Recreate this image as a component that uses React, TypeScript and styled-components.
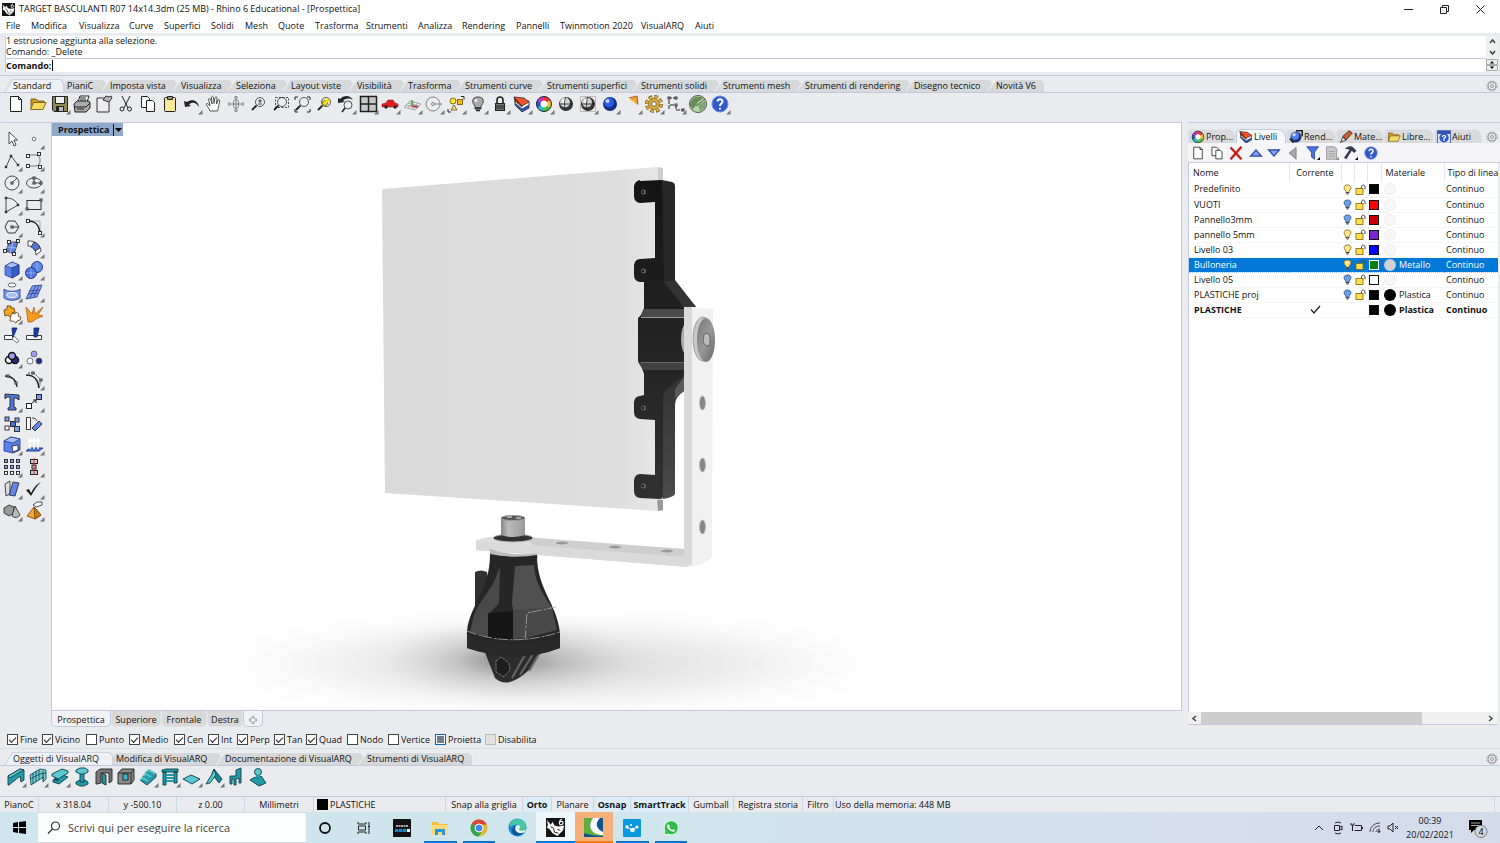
import React from "react";
import styled, { createGlobalStyle, css } from "styled-components";

const line = "#c3cadd";
const chrome = "#eaebef";
const ui = '"Open Sans", "Noto Sans", sans-serif';

const GlobalStyle = createGlobalStyle`
  *, *::before, *::after { box-sizing: border-box; }
  body { margin: 0; background: ${chrome}; font-family: ${ui}; font-size: 9px; line-height: 12px; color: #111; }
  button, input { font: inherit; color: inherit; margin: 0; }
  button { border: 0; background: none; padding: 0; white-space: nowrap; }
  h1, p { margin: 0; font-size: inherit; font-weight: inherit; }
  svg { display: block; }
`;

const Window = styled.div`
  min-height: 100vh;
  display: flex;
  flex-direction: column;
  overflow: hidden;
`;

const TitleBar = styled.header`
  display: flex;
  align-items: center;
  height: 18px;
  padding: 0 4px 0 2px;
  gap: 4px;
  background: #fff;
`;
const Title = styled.h1`
  flex: 1;
  white-space: nowrap;
`;
const WindowButton = styled.button`
  width: 32px;
  height: 16px;
  display: grid;
  place-items: center;
`;
const MenuBar = styled.nav`
  display: flex;
  height: 15px;
  padding-left: 6px;
  background: #fff;
`;
const MenuItem = styled.button<{ $w: number }>`
  flex: 0 0 ${(p) => p.$w}px;
  text-align: left;
`;

const CommandArea = styled.section`
  display: flex;
  height: 43px;
  padding: 3px 2px 3px 5px;
  border-bottom: 1px solid ${line};
`;
const CommandBox = styled.div`
  flex: 1;
  background: #fff;
  border-left: 1px solid ${line};
`;
const History = styled.div`
  height: 23px;
  border-bottom: 1px solid ${line};
  line-height: 10px;
  p { height: 11px; }
`;
const Prompt = styled.label`
  display: flex;
  align-items: center;
  height: 13px;
  font-weight: 700;
`;
const Caret = styled.span`
  width: 1px;
  height: 11px;
  margin-left: 1px;
  background: #000;
`;
const PromptInput = styled.input`
  flex: 1;
  height: 12px;
  border: 0;
  outline: 0;
  background: none;
`;
const Spinner = styled.div`
  width: 12px;
  background: #f0f0f0;
`;

const TabStrip = styled.div`
  display: flex;
  align-items: flex-end;
  height: 17px;
  padding-left: 4px;
  border-bottom: 1px solid ${line};
  position: relative;
`;
const Tab = styled.button<{ $w: number; $active?: boolean }>`
  position: relative;
  flex: 0 0 ${(p) => p.$w + 6}px;
  height: 13px;
  margin-right: -6px;
  padding-left: 9px;
  text-align: left;
  line-height: 13px;
  isolation: isolate;
  background: ${(p) => (p.$active ? "#ccd3e4" : "#eceef6")};
  clip-path: polygon(8px 0, calc(100% - 3px) 0, 100% 3px, 100% 100%, 0 100%);
  z-index: ${(p) => (p.$active ? 1 : 0)};
  &::before {
    content: "";
    position: absolute;
    z-index: -1;
    inset: 1px 1px 0 1px;
    background: ${(p) => (p.$active ? "#eff0f5" : "#d7d8d9")};
    clip-path: polygon(8px 0, calc(100% - 3px) 0, 100% 3px, 100% 100%, 0 100%);
  }
`;
const Gear = styled.button`
  margin-left: auto;
  width: 14px;
  height: 13px;
`;
const ToolGrid = styled.div<{ $cols: number; $width: number }>`
  display: grid;
  grid-template-columns: repeat(${(p) => p.$cols}, 1fr);
  width: ${(p) => p.$width}px;
  margin-left: 5px;
`;
const ToolButton = styled.button`
  height: 22px;
  min-height: 0;
  display: grid;
  place-items: center;
`;
const TopTools = styled.section`
  height: 43px;
`;

const Workspace = styled.main`
  flex: 1;
  display: grid;
  grid-template-columns: 51px minmax(0, 1fr) 312px;
  padding-top: 3px;
`;
const SideTools = styled.aside`
  display: grid;
  grid-template-columns: 22px 22px;
  grid-template-rows: repeat(18, minmax(0, 1fr));
  align-self: start;
  height: 400px;
  padding-top: 5px;
  margin-left: 1px;
  border-top: 1px solid ${line};
`;
const ViewColumn = styled.section`
  display: flex;
  flex-direction: column;
  margin-right: 6px;
`;
const Viewport = styled.div`
  position: relative;
  flex: 1;
  min-height: 0;
  background: #fff;
  border: 1px solid ${line};
  overflow: hidden;
`;
const ViewLabel = styled.button`
  position: absolute;
  left: 0;
  top: 0;
  display: flex;
  align-items: center;
  width: 71px;
  height: 13px;
  padding-left: 6px;
  background: #8fa9c8;
  font-weight: 700;
`;
const ViewArrow = styled.span`
  margin-left: auto;
  padding: 3px 1px;
  border-left: 1px solid #111;
`;
const ViewTabs = styled.div`
  display: flex;
  height: 16px;
`;
const ViewTab = styled.button<{ $w: number; $active?: boolean }>`
  width: ${(p) => p.$w}px;
  height: 16px;
  padding-top: 2px;
  border: 1px solid ${(p) => (p.$active ? line : "#e0e2e8")};
  border-top: 0;
  border-radius: 0 0 5px 5px;
  background: ${(p) => (p.$active ? "#f1f2f6" : "#d9d9d9")};
  display: grid;
  place-items: center;
`;

const LayerPanel = styled.aside`
  display: flex;
  flex-direction: column;
  border-top: 1px solid ${line};
  padding-top: 5px;
`;
const PanelTabs = styled.div`
  display: flex;
  align-items: flex-end;
  height: 15px;
`;
const PanelTab = styled.button<{ $w: number; $active?: boolean }>`
  flex: 0 0 ${(p) => p.$w}px;
  height: 14px;
  display: flex;
  align-items: center;
  gap: 1px;
  padding-left: 2px;
  border-radius: 4px 8px 0 0;
  background: ${(p) => (p.$active ? "#f6f7fa" : "#d9dadc")};
  border: 1px solid ${(p) => (p.$active ? line : "#dfe3ee")};
  border-bottom: 0;
`;
const PanelTools = styled.div`
  display: flex;
  align-items: center;
  height: 20px;
  background: #f5f5f7;
  border-bottom: 1px solid ${line};
`;
const PanelTool = styled.button<{ $w: number }>`
  width: ${(p) => p.$w}px;
  display: grid;
  place-items: center;
`;
const LayerList = styled.div`
  flex: 1;
  background: #fff;
  border-left: 1px solid ${line};
  margin-right: 2px;
`;
const LayerTable = styled.table`
  width: 100%;
  table-layout: fixed;
  border-collapse: collapse;
  th { height: 19px; font-weight: 400; text-align: left; padding: 0 0 0 4px; border-right: 1px solid #e5e7ee; white-space: nowrap; }
  th:nth-child(2) { text-align: center; padding: 0; }
  th:last-child { padding-left: 3px; border-right: 0; }
  td { height: 15px; padding: 0; white-space: nowrap; }
  td:first-child { padding-left: 5px; }
  td:last-child { padding-left: 2px; }
  td svg { margin: 0 auto; }
`;
const LayerRow = styled.tr<{ $selected?: boolean; $current?: boolean }>`
  border-bottom: 1px solid #f5f5f5;
  ${(p) => p.$selected && css`background: #0078d7; color: #fff; border-bottom: 1px dotted #9fd0ff;`}
  ${(p) => p.$current && css`font-weight: 700;`}
`;
const Swatch = styled.span<{ $color: string; $selected?: boolean }>`
  display: block;
  width: 10px;
  height: 10px;
  margin: 0 auto;
  background: ${(p) => p.$color};
  border: 1px solid ${(p) => (p.$selected ? "#fff" : "#111")};
`;
const Material = styled.span`
  display: flex;
  align-items: center;
  gap: 3px;
  padding-left: 3px;
`;
const MaterialBall = styled.span<{ $color: string }>`
  width: 12px;
  height: 12px;
  border-radius: 50%;
  background: ${(p) => p.$color};
  border: 1px solid rgba(0, 0, 0, 0.04);
`;
const ScrollRow = styled.div`
  display: flex;
  align-items: center;
  height: 13px;
  margin-right: 3px;
  background: #f0f0f0;
  border-bottom: 1px solid ${line};
`;
const ScrollButton = styled.button`
  width: 13px;
  height: 11px;
  display: grid;
  place-items: center;
`;
const ScrollTrack = styled.div`
  flex: 1;
`;
const ScrollThumb = styled.div`
  width: 78%;
  height: 12px;
  background: #cdcdcd;
`;
const PanelFoot = styled.div`
  height: 2px;
`;

const OsnapBar = styled.section`
  display: flex;
  align-items: center;
  height: 18px;
  margin-top: 4px;
  padding-left: 7px;
  border-bottom: 1px solid #dadde6;
`;
const OsnapItem = styled.label<{ $w: number }>`
  display: flex;
  align-items: center;
  gap: 2px;
  flex: 0 0 ${(p) => p.$w}px;
  white-space: nowrap;
`;
const Box = styled.input<{ $partial?: boolean }>`
  appearance: none;
  flex: 0 0 11px;
  height: 11px;
  background: #fff;
  border: 1px solid #444;
  display: grid;
  place-items: center;
  &:checked::after {
    content: "";
    width: 7px;
    height: 4px;
    border-left: 1px solid #222;
    border-bottom: 1px solid #222;
    transform: translateY(-1px) rotate(-45deg);
  }
  &:disabled { background: #e2e2e0; border-color: #bbb; }
  ${(p) => p.$partial && css`
    border-color: #0a64ad;
    &::after { content: ""; width: 7px; height: 7px; background: #6c7f90; }
  `}
`;
const ArqTools = styled.section`
  height: 47px;
`;

const StatusBar = styled.footer`
  display: flex;
  height: 16px;
  border-top: 1px solid ${line};
`;
const StatusCell = styled.button<{ $w: number; $on?: boolean; $left?: boolean }>`
  flex: 0 0 ${(p) => p.$w}px;
  display: flex;
  align-items: center;
  justify-content: ${(p) => (p.$left ? "flex-start" : "center")};
  gap: 2px;
  padding-left: ${(p) => (p.$left ? 1 : 0)}px;
  border-right: 1px solid #cfd5e4;
  background: ${(p) => (p.$on ? "#dcedf9" : "transparent")};
  font-weight: ${(p) => (p.$on ? 700 : 400)};
`;
const LayerChip = styled.span`
  width: 11px;
  height: 11px;
  margin-left: 2px;
  background: #000;
`;
const Taskbar = styled.nav`
  display: flex;
  height: 31px;
  background: linear-gradient(90deg, #cfe6ef 0%, #d0e5ec 50%, #d5dfee 78%, #d4dcec 100%);
`;
const StartButton = styled.button`
  width: 38px;
  display: grid;
  place-items: center;
`;
const SearchBox = styled.label`
  display: flex;
  align-items: center;
  gap: 6px;
  width: 268px;
  padding-left: 9px;
  background: #fbfdfe;
  border: 1px solid #cfd9de;
  border-width: 1px 0;
`;
const SearchInput = styled.input`
  flex: 1;
  min-width: 0;
  padding: 0 1px;
  border: 0;
  outline: 0;
  background: none;
  font-size: 11px;
  &::placeholder { color: #444; opacity: 1; }
`;
const TaskIcons = styled.div`
  display: grid;
  grid-template-columns: repeat(10, 1fr);
  width: 384px;
`;
const TaskButton = styled.button<{ $open?: boolean; $tint?: string }>`
  display: grid;
  place-items: center;
  background: ${(p) => p.$tint || "transparent"};
  border-bottom: 2px solid ${(p) => (p.$tint === "#f5b07a" ? "#f57c12" : p.$open ? "#0a78d0" : "transparent")};
  margin: 0 ${(p) => (p.$tint ? 0 : 3)}px;
  padding-top: 2px;
`;
const Tray = styled.div`
  display: flex;
  align-items: center;
  margin-left: auto;
  padding-right: 4px;
`;
const TrayButton = styled.button<{ $w: number }>`
  width: ${(p) => p.$w}px;
  display: grid;
  place-items: center;
`;
const Clock = styled.time`
  width: 58px;
  text-align: center;
  line-height: 14px;
`;

/* Glyphs are drawn on a 22 x 22 grid. */
const K = "#222";
const L = "#a9bdf5";
const S = { fill: "none", stroke: K, strokeWidth: 1 };
const Sq = ({ x, y, f = "#fff", s = 3 }: { x: number; y: number; f?: string; s?: number }) => (
  <rect x={x - s / 2} y={y - s / 2} width={s} height={s} fill={f} stroke={K} strokeWidth=".9" />
);
const lens = (
  <g>
    <circle cx="13" cy="9" r="4.500" fill="#e9eef0" stroke="#555" />
    <path d="M9.500 12.500L5 17" stroke={K} strokeWidth="1.800" />
  </g>
);
const ball = (c1: string, c2: string) => (
  <g>
    <circle cx="11" cy="11" r="7" fill={c2} />
    <circle cx="10" cy="9.500" r="5" fill={c1} />
    <circle cx="8.500" cy="8" r="2" fill="#fff" opacity=".75" />
  </g>
);
const wheel = (
  <g fill="none" strokeWidth="4">
    <circle cx="11" cy="11" r="4" fill="#fff" />
    {["#e33", "#f4c020", "#52c234", "#25bfc5", "#2c55dc", "#c335c8"].map((c, i) => (
      <path key={c} d="M11 5.500a5.500 5.500 0 0 1 4.760 2.750" stroke={c} transform={`rotate(${i * 60} 11 11)`} />
    ))}
    <circle cx="11" cy="11" r="7.500" stroke={K} strokeWidth="1" />
  </g>
);
const layers = (
  <g stroke={K} strokeWidth=".7">
    <path d="M4 8v4l7 7 7-4v-5z" fill="#2954bf" />
    <path d="M4 7v3l7 6 7-4V8z" fill="#fff" />
    <path d="M3 4l8 6v4L4 8z" fill="#a82b16" />
    <path d="M3 4l10 1 5 4-7 4z" fill="#ef5427" />
  </g>
);
const help = (
  <g>
    <circle cx="11" cy="11" r="8" fill="#3158c9" stroke="#6e8de0" />
    <path d="M8.500 8.500c.3-3.300 5.300-3 5 .2-.2 1.700-2.500 2-2.500 4.300M11 14.800v1.800" fill="none" stroke="#fff" strokeWidth="2" />
  </g>
);
const box = <g stroke="#243a86" strokeWidth=".7"><path d="M4 7l7-4 7 3v9l-7 4-7-3z" fill="#5a80e8" /><path d="M4 7l7-4 7 3-7 3z" fill={L} /><path d="M11 9v10l7-4V6z" fill="#375cc4" /></g>;
const cog = (
  <g>
    <circle cx="11" cy="11" r="7" fill="none" stroke="#5c4a16" strokeWidth="4" strokeDasharray="3.500 2" />
    <circle cx="11" cy="11" r="7" fill="none" stroke="#d8ab3a" strokeWidth="3" strokeDasharray="2.800 2.700" strokeDashoffset="-.3" />
    <circle cx="11" cy="11" r="5.500" fill="#d8ab3a" stroke="#8a6718" strokeWidth=".6" />
    <circle cx="11" cy="11" r="2.300" fill="#fff" stroke="#555" strokeWidth=".8" />
  </g>
);

const teal = "#249aa8";
const tealLight = "#5cc6d1";
const glyphs: Record<string, React.ReactNode> = {
  file: <path d="M5.500 3.500h8l3 3v12h-11zM13.500 3.500v3h3" fill="#fff" stroke={K} />,
  open: <g stroke="#6b4c0c" strokeWidth=".8"><path d="M4 16V6h5l2 2h6v3" fill="#d49d1f" /><path d="M3.500 16.500l3-7H19l-3 7z" fill="#fadb62" /></g>,
  save: <g stroke={K}><path d="M3.500 3.500h15v15H5l-1.500-1.500z" fill="#8e8b55" /><path d="M6.500 3.500h9v7h-9z" fill="#eee" /><path d="M7.500 13.500h7v5h-7z" fill="#bbb" /><path d="M9 14v4" strokeWidth="2" /></g>,
  print: <g stroke={K}><path d="M7 9l2-6h9l-2 6" fill="#fff" /><path d="M3 11l3-3h12l1 2v5l-4 4H4z" fill="#aaa" /><path d="M4 14h11M15 14l4-4M6 16h7M9 5h6M9 7h6" fill="none" /></g>,
  notes: <g stroke={K} strokeWidth=".9"><path d="M4 5h12v14H4z" fill="#eee" /><path d="M10 7l3-4 3 1 2-1 1 2-3 4-3-1z" fill="#bbb" /></g>,
  cut: <g {...S}><path d="M7 3l6 12M15 3L9 15" /><circle cx="7" cy="16" r="2" /><circle cx="14.500" cy="16" r="2" /></g>,
  copy: <g fill="#fff" stroke={K}><path d="M4.500 3.500h6l2 2v9h-8z" /><path d="M9.500 7.500h6l2 2v9h-8z" /></g>,
  paste: <g stroke={K}><rect x="5.500" y="4.500" width="11" height="14" rx="1" fill="#f7e998" /><path d="M8.500 3.500h5v3h-5z" fill="#999" /></g>,
  undo: <path d="M3 8l1 6 6-1-2-1.500c3-3 7-2.500 10 2.500-1-7-7-8.500-12-5z" fill={K} />,
  hand: <path d="M7 18c-1-3-3-5-4-7 1-1 2-.5 4 2L5.500 6c1-1 2-.5 2.500 1l1 4-.5-7c1-1.200 2-.5 2 .5l.5 6 1-6c1-1 2-.5 2 .5l-.5 6 1.500-4c1.500-.7 2 0 1.500 2-1 4-1 6-2 9z" fill="#fff" stroke="#444" strokeWidth=".9" />,
  rotate: <g {...S} stroke="#777" strokeWidth=".9"><path d="M11 3v16M3 11h16M9 5l2-2 2 2M9 17l2 2 2-2M5 9l-2 2 2 2M17 9l2 2-2 2" /><ellipse cx="11" cy="11" rx="2.500" ry="5" /></g>,
  zoom: <g>{lens}<path d="M11 8h4M13 6v4M11 11h4" stroke={K} strokeWidth=".8" /></g>,
  zoomWin: <g>{lens}<rect x="6.500" y="4.500" width="13" height="10" fill="none" stroke={K} strokeDasharray="2 1.500" strokeWidth=".8" /></g>,
  zoomExt: <g>{lens}<path d="M4 7V4h3M16 4h3v3M4 16v3h3M16 19h3v-3" {...S} /></g>,
  zoomSel: <g>{lens}<circle cx="12" cy="10" r="2.500" fill="#fbe114" stroke="#8b7510" /><circle cx="14.500" cy="7.500" r="2" fill="#fbe114" /></g>,
  zoomPrev: <g><circle cx="13" cy="12" r="4" fill="#e9eef0" stroke="#555" /><path d="M10 15l-3 4" stroke={K} strokeWidth="1.500" /><path d="M3 10l0-5 2 1c4-4 10-4 13 1-4-2-7-2-10 1l2 1z" fill={K} /></g>,
  grid4: <g><path d="M3.500 3.500h16v15h-16z" fill="#c9c9ca" stroke={K} strokeWidth="1.500" /><path d="M11.500 4v14M4 11h15" stroke={K} strokeWidth="1.500" /></g>,
  car: <g><path d="M3 11l4-1 2-3h5l2 3 3 1v3H3z" fill="#e02020" stroke="#701010" strokeWidth=".5" /><circle cx="7" cy="14" r="1.700" fill={K} /><circle cx="16" cy="14" r="1.700" fill={K} /></g>,
  cplane: <g {...S} stroke="#888" strokeWidth=".7"><path d="M3 14l6-6 11 3-6 6zM5 12l11 3M7 10l11 3M7 15l6-6M11 16l6-6" /><path d="M11 13V7" stroke="#2a2" strokeWidth="1.300" /><path d="M11 13l6 1" stroke="#c22" strokeWidth="1.300" /></g>,
  target: <g {...S} stroke="#777" strokeWidth=".9"><circle cx="10" cy="11" r="7" /><circle cx="10" cy="11" r="1.500" /><path d="M12 11h7" /></g>,
  shapes: <g stroke="#735000" strokeWidth=".8"><circle cx="8" cy="8" r="3" fill="#fbe331" /><rect x="12.500" y="6.500" width="5" height="5" fill="#f4b51c" /><path d="M6 17l3-5 3 5z" fill="#f6d7a2" /><path d="M16 3.500h3v3M3 16v3h3" {...S} /></g>,
  bulb: <g><path d="M11 4c-7 0-6 6-3 9v3h6v-3c3-3 4-9-3-9z" fill="#aaa" stroke="#444" /><path d="M8 15h6M9 17.500h4" stroke={K} strokeWidth="1.500" /><circle cx="9" cy="7.500" r="1.500" fill="#eee" /></g>,
  lock: <g><path d="M8 11V7c0-4 6-4 6 0v4" fill="none" stroke={K} strokeWidth="1.600" /><rect x="6.500" y="10.500" width="9" height="7" fill="#777" stroke={K} /><path d="M7 13h8M7 15h8" stroke={K} /></g>,
  layers, wheel, help,
  shade: <g>{ball("#d5d5d5", "#373737")}<path d="M4 11h14M11 4c-2 4-2 10 0 14" stroke={K} strokeWidth=".8" fill="none" /></g>,
  shadeGrid: <g><rect x="3.500" y="3.500" width="15" height="15" fill="#eee" stroke="#888" strokeDasharray="1 1" />{ball("#cfcfcf", "#333")}<path d="M4 11h14M11 4c-2 4-2 10 0 14" stroke={K} strokeWidth=".8" fill="none" /></g>,
  blueBall: ball("#265be2", "#132e81"),
  cone: <g><path d="M8 5l8-2 1 9z" fill="#f6a52a" stroke="#844d12" strokeWidth=".8" /><path d="M8 5l9 7" stroke="#ffe08a" /></g>,
  gear: cog,
  dims: <g {...S}><path d="M4 16V5h7M11 12v5h7M5 12h6" strokeDasharray="4 1" /><Sq x={4} y={5} s={2} /><Sq x={11} y={5} s={2} /><Sq x={11} y={12} s={2} /><Sq x={18} y={17} s={2} /></g>,
  green: <g><circle cx="11" cy="11" r="8.500" fill="#b5d5a4" stroke="#555" /><path d="M3 13c0-8 8-11 13-8-1 2-6 3-6 6l-4 5z" fill="#658d58" /><path d="M11 12l7-4c2 5-1 9-5 10z" fill="#7fa573" /><path d="M9 13l9-7" stroke="#333" strokeWidth=".7" /></g>,

  pointer: <path d="M8 4v12l3-3 2 5 2-1-2-5h3.500z" fill="#fff" stroke={K} strokeWidth=".8" />,
  point: <circle cx="11" cy="11" r="1.800" fill="#fff" stroke="#555" strokeWidth=".8" />,
  polyline: <g {...S} strokeWidth=".8"><path d="M5 17l5-11 7 9" /><Sq x={5} y={17} s={1.5} /><Sq x={10} y={6} s={1.5} /><Sq x={17} y={15} s={1.5} /></g>,
  curve: <g {...S}><path d="M5 5h8c5 0 6 10 0 11H5" stroke="#777" /><Sq x={5} y={6} /><Sq x={16} y={4} /><Sq x={5} y={16} /><Sq x={17} y={17} /></g>,
  circle: <g {...S} strokeWidth=".8"><circle cx="11" cy="11" r="7" /><path d="M11 11l5-5" /><Sq x={11} y={11} s={2} /></g>,
  ellipse: <g {...S} strokeWidth=".8"><ellipse cx="11" cy="11" rx="7.500" ry="5" /><path d="M11 11V6M11 11h7" /><Sq x={11} y={11} s={2} /><Sq x={18} y={11} s={2} /><Sq x={11} y={6} s={2} /></g>,
  arc: <g {...S} strokeWidth=".8"><path d="M5 18V4c7 0 10 3 12 7z" /><Sq x={5} y={4} s={1.5} /><Sq x={5} y={18} s={1.5} /><Sq x={17} y={11} s={1.5} /></g>,
  rect: <g {...S} strokeWidth=".9"><rect x="4" y="6.500" width="14" height="9" /><Sq x={4} y={15} s={2} /><Sq x={18} y={6} s={2} /></g>,
  polygon: <g {...S} strokeWidth=".9"><path d="M4 11l3-6h7l4 6-4 6H7z" /><path d="M11 11h6" /><Sq x={11} y={11} s={2} /></g>,
  fillet: <g {...S}><path d="M5 5h12v12" stroke="#aaa" /><path d="M5 5c8 0 11 4 12 12" strokeWidth="1.600" /><Sq x={5} y={5} /><Sq x={17} y={17} /></g>,
  surfPts: <g><path d="M8 5h9l-4 12-8-3z" fill="#5b7fe4" stroke={K} strokeWidth=".8" /><path d="M12 5l-3 11M6 10l9 1" stroke={L} /><Sq x={8} y={5} /><Sq x={17} y={4} /><Sq x={4} y={14} /><Sq x={13} y={17} /></g>,
  patch: <g stroke={K} strokeWidth=".8"><path d="M5 4c7-1 13 5 13 10l-5 4c0-6-3-9-8-9z" fill="#fff" /><path d="M11 5c3 1 5 3 6 6l-5 3c-1-2-2-3-4-4z" fill="#5076de" /></g>,
  box,
  spheres: <g stroke="#183079" strokeWidth=".9"><circle cx="14" cy="8" r="5.500" fill="#6288ea" /><circle cx="8" cy="14" r="5.500" fill="#4d75df" /><path d="M3 14h10M8 9v10M14 3v9" stroke={L} strokeWidth=".7" /></g>,
  tube: <g stroke="#26418e" strokeWidth=".9"><ellipse cx="11" cy="4" rx="4" ry="2" fill="#fff" stroke="#555" /><path d="M3 8c3 3 13 3 16 0v9c-5 3-11 3-16 0z" fill="#7e9af0" /><ellipse cx="11" cy="14" rx="5" ry="2.500" fill={L} stroke="#fff" /></g>,
  mesh: <g stroke="#26418e" strokeWidth=".8"><path d="M9 5l10-1-5 12-11 2z" fill="#7e9aef" /><path d="M6 10l11-1M5 13l11-1M13 4L7 17M16 4l-5 12" /></g>,
  puzzle: <g stroke="#5d3d00" strokeWidth=".8"><path d="M3 7l3-1V3h4v2l3 0 1 4-3 1 1 3-3 1-2-2-3 1z" fill="#f3a51c" /><path d="M10 12l2-2 2 1 1-2 3 2-1 2 3 1-1 3-3 1-1 2-3-2-3 0z" fill="#fff" /></g>,
  burst: <path d="M3 4l6 7 2-7 1 7 8-7-5 8 5 1-7 3-4 3H5z" fill="#f49b1b" stroke="#a45a07" strokeWidth=".7" />,
  trim: <g stroke={K} strokeWidth=".9"><path d="M3.500 10.500h8v4h-8z" fill="#fff" /><path d="M13 11l5 5-2 2-5-4z" fill="#fff" stroke="#777" /><path d="M11 3h5l-4 9z" fill="#1d3c9e" stroke="#122b74" /></g>,
  split: <g stroke={K} strokeWidth=".9"><path d="M3.500 10.500h15v4h-15z" fill="#fff" /><path d="M11 3h5l-2 9h-3z" fill="#1d3c9e" stroke="#122b74" /></g>,
  group: <g stroke="#111" strokeWidth="1.500"><circle cx="8" cy="13" r="3.500" fill="#fff" /><circle cx="14" cy="13" r="3.500" fill="#20298e" /><circle cx="11" cy="9" r="3.500" fill="#9b9bf0" /></g>,
  ungroup: <g stroke="#555" strokeWidth=".8"><circle cx="11" cy="7" r="3" fill="#9b9bf0" /><circle cx="7" cy="14" r="3" fill="#fff" /><circle cx="16" cy="14" r="3" fill="#20298e" /></g>,
  join: <g {...S} strokeWidth="1.300"><path d="M4 7c8 0 11 4 12 11" /><Sq x={7} y={7} s={2} /><Sq x={15} y={14} s={2} /></g>,
  editPts: <g {...S}><path d="M3 6c9 0 12 5 13 13" strokeWidth="1.700" /><path d="M5 4h6l6 6v7" strokeDasharray="2 1" strokeWidth=".8" /><Sq x={10} y={4} s={2} /><Sq x={18} y={11} s={2} /></g>,
  text: <path d="M4 3l14 1v5l-3-2-2 0v9l2 1v2H7v-2l2-1V6L6 6 4 8z" fill="#5076de" stroke={K} strokeWidth=".9" />,
  move: <g><rect x="3.500" y="12.500" width="5" height="5" fill="#fff" stroke={K} /><rect x="13.500" y="3.500" width="5" height="5" fill="#7896ee" stroke={K} /><path d="M9 12l4-3m-3 0h3v3" {...S} /></g>,
  copyObj: <g><Sq x={6} y={6} f="#84a2f0" s={4} /><Sq x={12} y={11} f="#4a70dc" s={5} /><Sq x={6} y={15} s={4} /><Sq x={16} y={7} f="#84a2f0" s={4} /><Sq x={16} y={16} f="#84a2f0" s={5} /></g>,
  rotateObj: <g stroke={K} strokeWidth=".9"><path d="M3.500 4.500h4v12h-4z" fill="#fff" /><path d="M9 15l7-7 3 3-7 7z" fill="#6386e8" /><path d="M9 5c3 0 4 1 5 3" fill="none" /></g>,
  roundBox: <g stroke="#243a86" strokeWidth=".8"><path d="M3 7l7-4 9 2v11l-7 3-9-2z" fill="#5a80e8" /><path d="M3 7l7-4 9 2-7 4z" fill={L} /><path d="M11 12l6-1v5l-5 2z" fill="#fff" stroke={K} /></g>,
  extrude: <g><path d="M3 17l4-3h13l-4 3z" fill="#4c75df" stroke="#26418e" /><path d="M7 15V6M11 15V6M15 15V6M5 8l2-3 2 3M9.500 8l1.500-3 2 3M13.500 8L15 5l2 3" fill="none" stroke="#fff" strokeWidth="1.500" /></g>,
  array: <g>{[5, 11, 17].map((y) => [5, 11, 17].map((x) => <Sq key={`${x}-${y}`} x={x} y={y} s={3} f={y === 17 ? "#fff" : "#86a3f3"} />))}</g>,
  align: <g stroke={K}><rect x="7.500" y="3.500" width="7" height="4" fill="#ccc" /><rect x="9" y="9" width="4" height="4" fill="#ccc" /><rect x="7.500" y="14.500" width="7" height="4" fill="#ccc" /><path d="M11 2v17" stroke="#d22" /></g>,
  unroll: <g stroke={K} strokeWidth=".8"><path d="M4 6l5-3v13l-4 2z" fill="#ddd" /><path d="M12 4l6 1-4 13-6-1z" fill="#6486e8" /></g>,
  check: <path d="M3 12l3-1 2 4c3-6 6-9 10-11-5 5-7 9-10 14z" fill={K} />,
  solids: <g stroke={K} strokeWidth=".8"><path d="M3 8l5-3 5 2v6l-5 3-5-3z" fill="#999" /><path d="M14 6l5 9c-2 3-6 3-8 1z" fill="#bbb" /></g>,
  pyramid: <g stroke="#6e4307" strokeWidth=".8"><path d="M11 7l7 8-6 4-8-3z" fill="#f3a83b" /><path d="M11 7l1 12 6-4z" fill="#c97c17" /><path d="M10 5l4-3h5v3l-6 2z" fill="#fff" stroke={K} /></g>,

  wall: <g stroke="#0b4048" strokeWidth=".9"><path d="M3 10L15 3l4 1v10l-3 2-1-6-11 9H3z" fill={teal} /><path d="M3 10L15 3l4 1-4 2-10 6z" fill={tealLight} /></g>,
  curtain: <g stroke="#0b4048" strokeWidth=".8"><path d="M3 9l10-6 6 1v9l-3 3v-5l-4 3-8 5z" fill="#79ccd5" /><path d="M6 7v11M9 5v11M12 4v10M16 5v9M3 13l10-5 6-1" fill="none" /></g>,
  beam: <g stroke="#0b4048" strokeWidth=".9"><path d="M4 14l10-5 5 2-9 7-6-2z" fill={teal} /><path d="M6 10l3 2v3l-3-1z" fill="#12606c" /><path d="M3 8l10-5 6 2v2l-10 6-6-3z" fill={tealLight} /></g>,
  column: <g fill={teal} stroke="#0b4048" strokeWidth=".9"><path d="M5 16l4-2h5l3 2v2l-4 2H9l-4-2z" /><path d="M9 6h4v10H9z" /><path d="M5 4l4-2h5l3 2v2l-4 2H9L5 6z" fill={tealLight} /></g>,
  door: <g stroke={K} strokeWidth=".9"><path d="M3 6l4-3h12v12l-3 2V7H8v10l-4 1H3z" fill="#777" /><path d="M9 7l4 2v10l-4-2z" fill={teal} /></g>,
  windowObj: <g stroke={K} strokeWidth=".9"><path d="M3 7l4-4h12v11l-3 4H3z" fill="#888" /><path d="M3 7h13v11M16 7l3-4" fill="none" /><rect x="8" y="8" width="5" height="6" fill="#35b8c6" /></g>,
  stair: <g stroke="#0b4048" strokeWidth=".9"><path d="M3 14l3-2v-2l3-2V6l3-2 7 4v3l-9 8z" fill={teal} /><path d="M3 14l3-2 5 3M6 10l3-2 5 3M9 6l3-2 6 4" fill="none" stroke={tealLight} strokeWidth="1.800" /></g>,
  railing: <g stroke="#0b4048" strokeWidth=".9"><path d="M3 4l4-1h12v3H3zM4 6h3v13H4zM15 6h3v11h-3z" fill={teal} /><path d="M7 9h8M7 12h8M7 15h8" fill="none" stroke={teal} strokeWidth="2" /></g>,
  slab: <path d="M2 13l8-4 9 4-8 5z" fill={tealLight} stroke="#0b4048" strokeWidth=".9" />,
  roof: <g stroke="#0b4048" strokeWidth=".9"><path d="M11 3l8 10-3 4-7-9z" fill="#188695" /><path d="M11 3l-2 5-6 10 4-1 6-8z" fill={tealLight} /></g>,
  chair: <g stroke="#0b4048" strokeWidth=".9"><path d="M11 10V4l5-2v15h-2v-5l-3 1v6H9v-6H7v5H5v-8z" fill={teal} /></g>,
  person: <g stroke="#0b4048" strokeWidth=".9"><path d="M3 14l5-3c2 2 5 1 6-1l5 7-7 3z" fill={teal} /><circle cx="11" cy="6" r="3.500" fill={tealLight} /><path d="M9 9h4v3H9z" fill={teal} stroke="none" /></g>,
};

const Glyph = ({ name, fly }: { name: string; fly?: boolean }) => (
  <svg width="22" height="22" viewBox="0 0 22 22" aria-hidden="true">
    {glyphs[name]}
    {fly && <path d="M21.500 17v4.500H17z" fill="#777" />}
  </svg>
);
const GearIcon = () => (
  <svg width="12" height="12" viewBox="0 0 12 12" fill="none" stroke="#999" aria-hidden="true">
    <circle cx="6" cy="6" r="5" strokeDasharray="2 1" /><circle cx="6" cy="6" r="4" /><circle cx="6" cy="6" r="1.500" />
  </svg>
);

/* A trailing "+" marks a tool that opens a flyout. */
const Tools = ({ items }: { items: string }) => (
  <>
    {items.split(" ").map((raw, i) => {
      const name = raw.replace("+", "");
      return <ToolButton key={i} aria-label={name}><Glyph name={name} fly={raw.endsWith("+")} /></ToolButton>;
    })}
  </>
);

const topTools = "file open save+ print notes cut copy paste undo+ hand rotate zoom zoomWin zoomExt zoomSel zoomPrev+ grid4+ car+ cplane+ target+ shapes+ bulb+ lock+ layers+ wheel+ shade shadeGrid+ blueBall+ cone+ gear+ dims+ green help+";
const sideTools = "pointer point+ polyline+ curve+ circle+ ellipse+ arc+ rect+ polygon+ fillet+ surfPts+ patch+ box+ spheres+ tube+ mesh+ puzzle+ burst trim split group+ ungroup join editPts+ text+ move+ copyObj rotateObj roundBox+ extrude+ array+ align+ unroll+ check+ solids+ pyramid+";
const arqTools = "wall+ curtain+ beam+ column door windowObj stair+ railing+ slab+ roof+ chair person";

type Entry = [string, number];
const menu: Entry[] = [["File", 25], ["Modifica", 48], ["Visualizza", 50], ["Curve", 35], ["Superfici", 47], ["Solidi", 34], ["Mesh", 33], ["Quote", 37], ["Trasforma", 51], ["Strumenti", 52], ["Analizza", 44], ["Rendering", 54], ["Pannelli", 44], ["Twinmotion 2020", 81], ["VisualARQ", 54], ["Aiuti", 30]];
const tabs: Entry[] = [["Standard", 54], ["PianiC", 43], ["Imposta vista", 71], ["Visualizza", 55], ["Seleziona", 55], ["Layout viste", 66], ["Visibilità", 51], ["Trasforma", 57], ["Strumenti curve", 82], ["Strumenti superfici", 94], ["Strumenti solidi", 82], ["Strumenti mesh", 82], ["Strumenti di rendering", 109], ["Disegno tecnico", 82], ["Novità V6", 52]];
const arqTabs: Entry[] = [["Oggetti di VisualARQ", 103], ["Modifica di VisualARQ", 109], ["Documentazione di VisualARQ", 142], ["Strumenti di VisualARQ", 109]];
const snaps: [string, number, boolean][] = [["Fine", 35, true], ["Vicino", 44, true], ["Punto", 43, false], ["Medio", 45, true], ["Cen", 34, true], ["Int", 29, true], ["Perp", 37, true], ["Tan", 32, true], ["Quad", 41, true], ["Nodo", 41, false], ["Vertice", 47, false], ["Proietta", 50, false], ["Disabilita", 60, false]];
const panelTabs: Entry[] = [["Prop...", 48], ["Livelli", 50], ["Rend...", 50], ["Mate...", 48], ["Libre...", 50], ["Aiuti", 48]];
const layerRows: [string, boolean | null, string, string, string][] = [
  ["Predefinito", true, "#000", "#f7f7f7", ""],
  ["VUOTI", false, "#f00", "#f7f7f7", ""],
  ["Pannello3mm", false, "#c80000", "#f7f7f7", ""],
  ["pannello 5mm", true, "#7d26cd", "#f7f7f7", ""],
  ["Livello 03", true, "#00f", "#f7f7f7", ""],
  ["Bulloneria", true, "#087c16", "#d2d2d2", "Metallo"],
  ["Livello 05", false, "#fff", "#f7f7f7", ""],
  ["PLASTICHE proj", false, "#000", "#000", "Plastica"],
  ["PLASTICHE", null, "#000", "#000", "Plastica"],
];
const status: [string, number, boolean?][] = [["Snap alla griglia", 77], ["Orto", 29, true], ["Planare", 42], ["Osnap", 37, true], ["SmartTrack", 58, true], ["Gumball", 45], ["Registra storia", 69], ["Filtro", 31]];

const Bulb = ({ on }: { on: boolean }) => (
  <svg width="9" height="11" viewBox="0 0 9 11" aria-hidden="true">
    <path d="M4.500 1C0 1 .5 5 3 7v2h3V7c2.500-2 3-6-1.500-6z" fill={on ? "#ffe98a" : "#6aa0e8"} stroke={on ? "#8d6d15" : "#34538c"} strokeWidth=".9" />
    <path d="M3 8.500h3M3.500 10h2" stroke="#444" />
  </svg>
);
const Padlock = () => (
  <svg width="11" height="11" viewBox="0 0 11 11" aria-hidden="true">
    <path d="M6.500 5V3c0-2.500 3.500-2.500 3.500 0v2" fill="none" stroke="#444" />
    <rect x="1" y="4.500" width="7" height="6" fill="#ffe04a" stroke="#80620b" strokeWidth=".8" />
  </svg>
);
const Chevron = ({ d }: { d: string }) => (
  <svg width="9" height="9" viewBox="0 0 9 9" fill="none" stroke="#444" strokeWidth="1.500" aria-hidden="true"><path d={d} /></svg>
);
const Small = ({ children }: { children: React.ReactNode }) => (
  <svg width="14" height="14" viewBox="2 2 18 18" aria-hidden="true">{children}</svg>
);
const panelTabIcons: React.ReactNode[] = [
  wheel,
  layers,
  <g key="r">{ball("#5682e6", "#1a327c")}<path d="M11 3h8v7M3 13l5 6" stroke={K} fill="none" strokeWidth="2" /></g>,
  <g key="m" stroke={K}><path d="M4 18l3-7 4 4z" fill="#ddd" /><path d="M7 10l8-7 4 3-8 9z" fill="#cf5b34" /></g>,
  glyphs.open,
  <g key="a"><rect x="2.500" y="3" width="17" height="16" fill="#dde6ff" stroke="#3050a0" /><path d="M3 5h16" stroke="#2e50aa" strokeWidth="4" /><circle cx="11" cy="12" r="6" fill="#3158c9" /><path d="M9 11c0-3 5-2 4 0l-2 2v3" fill="none" stroke="#fff" strokeWidth="1.500" /></g>,
];
const panelTools: [string, number, React.ReactNode][] = [
  ["Nuovo livello", 20, glyphs.file],
  ["Nuovo sottolivello", 18, glyphs.copy],
  ["Elimina", 20, <path d="M4 4l14 15M18 3L4 19" stroke="#c91919" strokeWidth="3" />],
  ["Su", 19, <path d="M4 15l7-8 7 8z" fill="#7e9df2" stroke="#25439a" strokeWidth="1.500" />],
  ["Giù", 18, <path d="M4 7l7 8 7-8z" fill="#7e9df2" stroke="#25439a" strokeWidth="1.500" />],
  ["Indietro", 20, <path d="M15 4v15L6 11z" fill="#aaa" stroke="#777" />],
  ["Filtro", 19, <g><path d="M3 3h15l-5 7v9l-4-3v-6z" fill="#4771dd" stroke="#243f8d" /><path d="M20 16v4h-4z" /></g>],
  ["Stato", 20, <g><path d="M4 3h10l3 3v13H4z" fill="#c9c9c9" stroke="#888" /><path d="M7 9h8M7 12h8M7 15h8" stroke="#999" /><path d="M20 16v4h-4z" fill="#888" /></g>],
  ["Strumenti", 18, <g><path d="M3 6c3-4 8-5 11-2l4 4-3 3-3-3L5 19l-3-2 7-10c-2-1-4-1-6-1z" fill="#333c52" /><path d="M20 16v4h-4z" /></g>],
  ["Guida", 21, help],
];

const RhinoMark = ({ size }: { size: number }) => (
  <svg width={size} height={size} viewBox="0 0 20 20" aria-hidden="true">
    <path d="M0 0h20v20H0z" fill="#151515" />
    <path d="M1 2l4 5 2-3 2 4 4 1 6-1-1 5-6 6-5-3-3-4-3-2 1-3z" fill="#fff" />
    <path d="M5 9l3 2 1 4 4 1M12 12l3 1" fill="none" stroke="#151515" />
    <path d="M17 1c-3 1-3 3-3 5 1 2 4 1 4-1s-3-2-4 0" fill="none" stroke="#fff" strokeWidth="1.200" />
  </svg>
);

const Model = () => (
  <svg width="1128" height="587" viewBox="52 123 1128 587" role="img" aria-label="Modello 3D">
    <defs>
      <radialGradient id="shade"><stop offset="0" stopColor="#555" stopOpacity=".65" /><stop offset=".35" stopColor="#888" stopOpacity=".32" /><stop offset=".7" stopColor="#bbb" stopOpacity=".14" /><stop offset="1" stopColor="#fff" stopOpacity="0" /></radialGradient>
      <radialGradient id="wide"><stop offset="0" stopColor="#999" stopOpacity=".45" /><stop offset=".5" stopColor="#bbb" stopOpacity=".25" /><stop offset="1" stopColor="#fff" stopOpacity="0" /></radialGradient>
      <linearGradient id="panel"><stop offset="0" stopColor="#dadada" /><stop offset=".85" stopColor="#dedede" /><stop offset="1" stopColor="#e6e6e6" /></linearGradient>
      <linearGradient id="dark" x2="0" y2="1"><stop offset="0" stopColor="#141414" /><stop offset=".5" stopColor="#232323" /><stop offset="1" stopColor="#303030" /></linearGradient>
      <linearGradient id="face" x2="0" y2="1"><stop offset="0" stopColor="#333" /><stop offset="1" stopColor="#4b4b4b" /></linearGradient>
      <linearGradient id="disc" x2="1" y2="1"><stop offset="0" stopColor="#777" /><stop offset=".5" stopColor="#999" /><stop offset="1" stopColor="#666" /></linearGradient>
      <linearGradient id="bolt"><stop offset="0" stopColor="#888" /><stop offset=".3" stopColor="#bcbcbc" /><stop offset="1" stopColor="#999" /></linearGradient>
    </defs>
    <ellipse cx="550" cy="664" rx="385" ry="62" fill="url(#wide)" />
    <ellipse cx="508" cy="660" rx="150" ry="48" fill="url(#shade)" />
    <path d="M382 189l276-22v344l-273-18z" fill="url(#panel)" />
    <path d="M658 167l5 1v342l-5 1z" fill="#cdcdcd" />
    <path d="M657 500h6v10l-5 1z" fill="#999" />
    <path d="M640 181l21-1q3 1 3 5v95l20 27v73l-20 18v97q-1 4-5 4l-19-1q-6-1-6-7v-11q1-6 6-6l15 1v-55l-15-1q-6-1-6-7v-10q1-6 6-6l4-1v-21l-3-9-3-4v-43l3-3 3-7v-26l-4 0q-6-1-6-7v-10q1-6 6-6l15-1v-56l-15 1q-6-1-6-7v-10q1-5 6-6z" fill="url(#dark)" />
    <path d="M662 180l10 2q3 1 3 4v94l21 27h-12l-20-23z" fill="#272727" />
    <path d="M664 281h11l21 26h-12z" fill="#343434" />
    <path d="M684 375v16q-9 6-9 14v89q-1 3-12 5V400q0-10 8-14z" fill="url(#face)" />
    <path d="M644 309h40v8h-43z" fill="#4a4a4a" /><path d="M641 317.500h43" stroke="#999" />
    <path d="M638 362h46v8h-41z" fill="#424242" /><path d="M641 362.500h43" stroke="#666" />
    <path d="M684 377v14l-9 7v-9z" fill="#5b5b5b" />
    {[192, 271, 408, 486].map((y) => <g key={y}><circle cx="643.500" cy={y} r="2.500" fill="#666" /><circle cx="643" cy={y} r="1.300" fill="#1b1b1b" /></g>)}
    <ellipse cx="686" cy="339" rx="5" ry="15" fill="#aaa" />
    <path d="M476 540l13-3 195 12 8 12-4 6-212-17z" fill="#dedede" />
    <path d="M525 537l159 12v9l-150-12z" fill="#cecece" />
    <path d="M476 541l208 16 4 10-212-17z" fill="#dadada" />
    <path d="M684 307h9v259l-9-3z" fill="#d9d9d9" />
    <path d="M692 307l21 2-1 247q-2 5-13 9l-7 2z" fill="#f1f1f1" />
    {[403, 465, 527].map((y) => <ellipse key={y} cx="702.500" cy={y} rx="3" ry="7" fill="#858585" stroke="#bbb" strokeWidth=".8" />)}
    {[[562, 543], [615, 547], [667, 551]].map(([x, y]) => <ellipse key={x} cx={x} cy={y} rx="6" ry="1.500" fill="#999" />)}
    <ellipse cx="703" cy="339" rx="10" ry="22" fill="#c7c7c7" stroke="#777" strokeWidth=".6" />
    <ellipse cx="706" cy="340" rx="9" ry="22" fill="url(#disc)" />
    <path d="M704 334l4-1 2 4v8l-4 1-3-4z" fill="#bbb" stroke="#666" />
    <path d="M475 572q6-3 12 0l6 37-18-2z" fill="#313131" />
    <path d="M490 549q24 8 47 4l1 5h-48z" fill="#bbb" />
    <ellipse cx="513" cy="538" rx="20" ry="4" fill="#333" stroke="#bbb" />
    <path d="M501 518h24v17q-12 4-24 0z" fill="url(#bolt)" />
    <ellipse cx="513" cy="518" rx="12" ry="2.500" fill="#555" stroke="#999" />
    <path d="M507 517h5M516 518h5" stroke="#eee" />
    <path d="M484 650l11 28q9 8 20 2 17-8 26-30z" fill="#2d2d2d" />
    <path d="M526 653l-14 25M533 654l-13 21M539 654l-10 17" fill="none" stroke="#666" strokeWidth="2" />
    <path d="M496 661l5-4 8 6 1 7-6 7-8-5z" fill="#1d1d1d" stroke="#777" strokeDasharray="3 1" />
    <path d="M490 554q24 5 47 1c0 35 20 48 23 78v15q-43 17-93 0v-17c3-27 23-40 23-77z" fill="#262626" />
    <path d="M500 567l-2 4c-4 17-18 28-24 44l15-1 10-11 1-36z" fill="#494949" />
    <path d="M515 566l19-1c1 20 12 33 18 43l-39 3-1-9z" fill="#505050" />
    <path d="M474 615l16-2-2 24-18-5z" fill="#4b4b4b" />
    <path d="M488 613l25-2v29l-25-2z" fill="#161616" />
    <path d="M513 611l39-3 5 22-31 8-13 1z" fill="#484848" />
    <path d="M467 631q43 17 93 1M525 640l2-27 29-6" fill="none" stroke="#a9a9a9" strokeWidth=".8" strokeDasharray="10 2 3 1" />
    <path d="M467 635q43 16 93 1v12q-43 16-93 0z" fill="#292929" />
  </svg>
);

const taskIcons: [string, React.ReactNode, boolean?, string?][] = [
  ["Cortana", <svg width="14" height="14" viewBox="0 0 14 14"><circle cx="7" cy="7" r="5" fill="none" stroke="#111" strokeWidth="1.800" /></svg>],
  ["Visualizzazione attività", <svg width="14" height="14" viewBox="0 0 14 14" fill="none" stroke="#222"><path d="M1 1v2h8V1M1 13v-2h8v2M1.500 5h7v4h-7zM12 1v3M12 7v6" /><path d="M11 5.500h2" strokeWidth="2" /></svg>],
  ["GoPro", <svg width="20" height="20" viewBox="0 0 20 20"><rect x="1" y="1" width="18" height="18" rx="1" fill="#121212" /><path d="M4 8h12" stroke="#aaa" strokeWidth="2" strokeDasharray="2 .5" /><path d="M3 12.500h12" stroke="#1686ce" strokeWidth="3" strokeDasharray="3.500 .5" /><path d="M15 11h3v3h-3z" fill="#fff" /></svg>],
  ["Esplora file", <svg width="18" height="18" viewBox="0 0 18 18"><path d="M1 3h6l1 2h9v11H1z" fill="#f4bb3c" /><path d="M1 6h16v10H1z" fill="#ffdc78" /><path d="M4 16v-6h10v6h-3v-3H7v3z" fill="#3091d6" /></svg>, true],
  ["Chrome", <svg width="18" height="18" viewBox="0 0 18 18"><circle cx="9" cy="9" r="8.500" fill="#e3b92f" /><path d="M9 9L1.600 4.800A8.500 8.500 0 0 1 16.800 5.500H9z" fill="#dc4437" /><path d="M9 9L1.600 4.800A8.500 8.500 0 0 0 8.500 17.500l4-6z" fill="#31a352" /><circle cx="9" cy="9" r="4" fill="#4589ed" stroke="#fff" /></svg>, true],
  ["Edge", <svg width="19" height="19" viewBox="0 0 19 19"><circle cx="9.500" cy="9.500" r="9" fill="#1687d2" /><path d="M2 6C5-1 17-1 18 8c.5 5-5 6-7 4 3-5-3-8-9-3z" fill="#47c7a2" /><path d="M8 8c-2 5 1 8 7 7-3 4-12 3-11-3 .5-2 2-4 4-4z" fill="#14539a" /><path d="M8 8c1-2 4-1 4 1l-1 3c3 1 5 1 7-1l-1 3c-6 3-12-1-9-6z" fill="#e7f6f4" /></svg>],
  ["Rhino 6", <RhinoMark size={19} />, true, "#edf6fa"],
  ["Editor", <svg width="19" height="19" viewBox="0 0 19 19"><path d="M0 0h19v19H0z" fill="#155290" /><path d="M0 0h9C4 7 6 12 12 15l7 2v2H0z" fill="#5dae3c" /><path d="M9 0h7c-6 6-3 11 3 14v3C7 17 3 8 9 0z" fill="#fff" /><path d="M0 15q8 3 19 3v1H0z" fill="#155290" /></svg>, true, "#f5b07a"],
  ["Grafici", <svg width="18" height="18" viewBox="0 0 18 18"><rect width="18" height="18" rx="1" fill="#0899df" /><path d="M4 8l5 3 5-3" stroke="#fff" fill="none" /><g fill="#fff"><circle cx="4" cy="8" r="1.700" /><circle cx="9.500" cy="11" r="2.300" /><circle cx="14" cy="8" r="1.600" /><circle cx="8" cy="6" r="1" /></g></svg>, true],
  ["WhatsApp", <svg width="16" height="16" viewBox="0 0 16 16"><path d="M1 15l1-4a7 7 0 1 1 3 3z" fill="#2bbd49" stroke="#effbef" /><path d="M5 4l2 2-.7 1.500c.7 1.300 1.500 2 3 2.500L11 9l1 2c-2 2-7-1-8-4 0-1 0-2 1-3z" fill="#fff" /></svg>, true],
];

export default function App() {
  return (
    <Window>
      <GlobalStyle />
      <TitleBar>
        <RhinoMark size={13} />
        <Title>TARGET BASCULANTI R07 14x14.3dm (25 MB) - Rhino 6 Educational - [Prospettica]</Title>
        <WindowButton aria-label="Riduci a icona"><svg width="9" height="9"><path d="M0 4.500h9" stroke="#222" /></svg></WindowButton>
        <WindowButton aria-label="Ripristina"><svg width="9" height="9" fill="none" stroke="#222"><path d="M.5 2.500h6v6h-6zM2.500 2V.5h6v6H7" /></svg></WindowButton>
        <WindowButton aria-label="Chiudi"><svg width="9" height="9" fill="none" stroke="#222"><path d="M.5.5l8 8M8.500.5l-8 8" /></svg></WindowButton>
      </TitleBar>
      <MenuBar>{menu.map(([t, w]) => <MenuItem key={t} $w={w}>{t}</MenuItem>)}</MenuBar>
      <CommandArea>
        <CommandBox>
          <History><p>1 estrusione aggiunta alla selezione.</p><p>Comando: _Delete</p></History>
          <Prompt>Comando:<Caret /><PromptInput type="text" /></Prompt>
        </CommandBox>
        <Spinner>
          <ScrollButton aria-label="Su"><Chevron d="M2 6l2.500-3L7 6" /></ScrollButton>
          <ScrollButton aria-label="Giù"><Chevron d="M2 3l2.500 3L7 3" /></ScrollButton>
          <svg width="12" height="14" aria-hidden="true"><path d="M.5 1.500h11v5H.5zM.5 7.500h11v5H.5z" fill="#eee" stroke="#aaa" /><path d="M4 5.500l2-2.500 2 2.500zM4 8.500L6 11l2-2.500z" /></svg>
        </Spinner>
      </CommandArea>
      <TopTools>
        <TabStrip>
          {tabs.map(([t, w], i) => <Tab key={t} $w={w} $active={i === 0}>{t}</Tab>)}
          <Gear aria-label="Opzioni"><GearIcon /></Gear>
        </TabStrip>
        <ToolGrid $cols={33} $width={723}><Tools items={topTools} /></ToolGrid>
      </TopTools>

      <Workspace>
        <SideTools><Tools items={sideTools} /></SideTools>
        <ViewColumn>
          <Viewport>
            <Model />
            <ViewLabel>Prospettica<ViewArrow><svg width="7" height="6"><path d="M0 1h7L3.500 5z" /></svg></ViewArrow></ViewLabel>
          </Viewport>
          <ViewTabs>
            <ViewTab $w={60} $active>Prospettica</ViewTab>
            <ViewTab $w={50}>Superiore</ViewTab>
            <ViewTab $w={46}>Frontale</ViewTab>
            <ViewTab $w={36}>Destra</ViewTab>
            <ViewTab $w={20} $active aria-label="Nuova vista"><svg width="8" height="8" fill="#fff" stroke="#888" strokeWidth=".8"><path d="M3 .5h2V3h2.500v2H5v2.500H3V5H.5V3H3z" /></svg></ViewTab>
          </ViewTabs>
        </ViewColumn>
        <LayerPanel>
          <PanelTabs>
            {panelTabs.map(([t, w], i) => <PanelTab key={t} $w={w} $active={i === 1}><Small>{panelTabIcons[i]}</Small>{t}</PanelTab>)}
            <Gear aria-label="Opzioni pannello"><GearIcon /></Gear>
          </PanelTabs>
          <PanelTools>
            {panelTools.map(([t, w, icon]) => <PanelTool key={t} $w={w} aria-label={t}><Small>{icon}</Small></PanelTool>)}
          </PanelTools>
          <LayerList>
            <LayerTable>
              <colgroup><col width="100" /><col width="52" /><col width="13" /><col width="13" /><col width="14" /><col width="63" /><col /></colgroup>
              <thead><tr><th>Nome</th><th>Corrente</th><th /><th /><th /><th>Materiale</th><th>Tipo di linea</th></tr></thead>
              <tbody>
                {layerRows.map(([name, on, color, ballColor, material]) => {
                  const selected = name === "Bulloneria";
                  return (
                    <LayerRow key={name} $selected={selected} $current={on === null}>
                      <td>{name}</td>
                      <td>{on === null && <svg width="11" height="9" fill="none" stroke="#222" strokeWidth="1.200"><path d="M1 4.500L4 8l6-7" /></svg>}</td>
                      <td>{on !== null && <Bulb on={on} />}</td>
                      <td>{on !== null && <Padlock />}</td>
                      <td><Swatch $color={color} $selected={selected} /></td>
                      <td><Material><MaterialBall $color={ballColor} />{material}</Material></td>
                      <td>Continuo</td>
                    </LayerRow>
                  );
                })}
              </tbody>
            </LayerTable>
          </LayerList>
          <ScrollRow>
            <ScrollButton aria-label="Scorri a sinistra"><Chevron d="M6 2L3 4.500 6 7" /></ScrollButton>
            <ScrollTrack><ScrollThumb /></ScrollTrack>
            <ScrollButton aria-label="Scorri a destra"><Chevron d="M3 2l3 2.500L3 7" /></ScrollButton>
          </ScrollRow>
          <PanelFoot />
        </LayerPanel>
      </Workspace>

      <OsnapBar>
        {snaps.map(([t, w, on]) => (
          <OsnapItem key={t} $w={w}>
            <Box type="checkbox" defaultChecked={on} disabled={t === "Disabilita"} $partial={t === "Proietta"} />{t}
          </OsnapItem>
        ))}
      </OsnapBar>
      <ArqTools>
        <TabStrip>
          {arqTabs.map(([t, w], i) => <Tab key={t} $w={w} $active={i === 0}>{t}</Tab>)}
          <Gear aria-label="Opzioni VisualARQ"><GearIcon /></Gear>
        </TabStrip>
        <ToolGrid $cols={12} $width={263}><Tools items={arqTools} /></ToolGrid>
      </ArqTools>
      <StatusBar>
        <StatusCell $w={39}>PianoC</StatusCell>
        <StatusCell $w={70}>x 318.04</StatusCell>
        <StatusCell $w={68}>y -500.10</StatusCell>
        <StatusCell $w={68}>z 0.00</StatusCell>
        <StatusCell $w={69}>Millimetri</StatusCell>
        <StatusCell $w={132} $left><LayerChip />PLASTICHE</StatusCell>
        {status.map(([t, w, on]) => <StatusCell key={t} $w={w} $on={on}>{t}</StatusCell>)}
        <StatusCell $w={661} $left>Uso della memoria: 448 MB</StatusCell>
      </StatusBar>
      <Taskbar>
        <StartButton aria-label="Start"><svg width="13" height="13"><path d="M0 2l5-1v5H0zM6 1l7-1v6H6zM0 7h5v5l-5-1zM6 7h7v6l-7-1z" /></svg></StartButton>
        <SearchBox>
          <svg width="14" height="14" fill="none" stroke="#333" strokeWidth="1.200"><circle cx="8.500" cy="5" r="4" /><path d="M5.500 8L1 12.500" /></svg>
          <SearchInput type="text" aria-label="Cerca" placeholder="Scrivi qui per eseguire la ricerca" />
        </SearchBox>
        <TaskIcons>{taskIcons.map(([t, icon, open, tint]) => <TaskButton key={t} aria-label={t} $open={open} $tint={tint}>{icon}</TaskButton>)}</TaskIcons>
        <Tray>
          <TrayButton $w={19} aria-label="Mostra icone nascoste"><svg width="10" height="7" fill="none" stroke="#222"><path d="M1 6l4-4 4 4" /></svg></TrayButton>
          <TrayButton $w={19} aria-label="Riunione"><svg width="10" height="14" fill="none" stroke="#222"><path d="M2 2q3-2 6 0M2 12q3 2 6 0M1.500 4.500h5v5h-5zM7 6l2-1v4L7 8" /></svg></TrayButton>
          <TrayButton $w={19} aria-label="Batteria"><svg width="13" height="11" fill="none" stroke="#222"><path d="M5 3.500h6.500v5h-7M12.500 5v2M1 1v2h3V1M2.500 3v6" /></svg></TrayButton>
          <TrayButton $w={18} aria-label="Rete"><svg width="12" height="11" fill="none" stroke="#444"><path d="M1 10C1 5 5 1 11 1M4 10c0-4 3-6 7-6M7 10c0-2 2-3 4-3" /><circle cx="10" cy="9.500" r="1" fill="#222" /></svg></TrayButton>
          <TrayButton $w={17} aria-label="Volume"><svg width="12" height="11" fill="none" stroke="#222"><path d="M1 4v3h2l3 3V1L3 4zM8 4l3 3M11 4L8 7" /></svg></TrayButton>
          <Clock>00:39<br />20/02/2021</Clock>
          <TrayButton $w={37} aria-label="4 notifiche">
            <svg width="20" height="20" viewBox="0 0 20 20"><path d="M1 2h13v10H6l-3 3v-3H1z" fill="#000" /><path d="M3 5h9M3 7.500h9" stroke="#aaa" /><circle cx="13" cy="13.500" r="6" fill="#d7dadd" stroke="#777" /><text x="13" y="17" textAnchor="middle" fontSize="9" fontFamily="Open Sans">4</text></svg>
          </TrayButton>
        </Tray>
      </Taskbar>
    </Window>
  );
}
